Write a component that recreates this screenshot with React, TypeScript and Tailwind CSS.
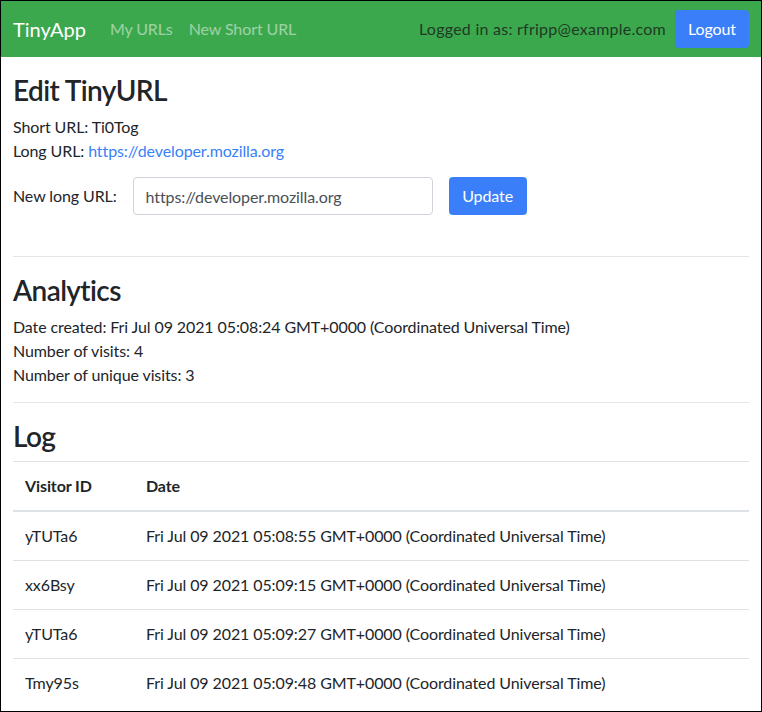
import React from 'react'

const visits = [
    { id: 'yTUTa6', date: 'Fri Jul 09 2021 05:08:55 GMT+0000 (Coordinated Universal Time)' },
    { id: 'xx6Bsy', date: 'Fri Jul 09 2021 05:09:15 GMT+0000 (Coordinated Universal Time)' },
    { id: 'yTUTa6', date: 'Fri Jul 09 2021 05:09:27 GMT+0000 (Coordinated Universal Time)' },
    { id: 'Tmy95s', date: 'Fri Jul 09 2021 05:09:48 GMT+0000 (Coordinated Universal Time)' },
]

export default function App() {
    return (
        <div className="h-[712px] w-[762px] overflow-hidden border border-black bg-white font-['Lato',sans-serif] text-base leading-6 tracking-[-0.1px] text-[#212529]">
            <nav className="flex h-14 items-center bg-[#3ca84e] px-3">
                <a className="mr-6 text-xl tracking-normal text-white">TinyApp</a>
                <div className="flex gap-4 text-base text-white/50">
                    <a>My URLs</a>
                    <a>New Short URL</a>
                </div>
                <div className="ml-auto flex items-center gap-[9px]">
                    <span className="tracking-[0.25px] text-[#1e3a23]">Logged in as: rfripp@example.com</span>
                    <button className="h-[38px] rounded bg-[#3a7ff9] px-[13px] text-white">Logout</button>
                </div>
            </nav>

            <main className="px-3 pt-4">
                <h2 className="mb-2 text-[28px] font-semibold leading-[34px] tracking-[-0.6px]">Edit TinyURL</h2>
                <p>Short URL: Ti0Tog</p>
                <p>
                    Long URL: <a className="text-[#3a7ff9]">https://developer.mozilla.org</a>
                </p>

                <form className="mt-[14px] flex items-center">
                    <label className="mr-4">New long URL:</label>
                    <input
                        className="h-[38px] w-[300px] rounded border border-[#ced4da] px-3 text-[#495057]"
                        defaultValue="https://developer.mozilla.org"
                    />
                    <button type="button" className="ml-4 h-[38px] w-[78px] rounded bg-[#3a7ff9] text-white">
                        Update
                    </button>
                </form>

                <hr className="mt-[41px] mb-4 border-black/10" />

                <h2 className="mb-2 text-[28px] font-semibold leading-[34px] tracking-[-0.6px]">Analytics</h2>
                <p>Date created: Fri Jul 09 2021 05:08:24 GMT+0000 (Coordinated Universal Time)</p>
                <p>Number of visits: 4</p>
                <p>Number of unique visits: 3</p>

                <hr className="mt-[15px] mb-4 border-black/10" />

                <h2 className="mb-2 text-[28px] font-semibold leading-[34px] tracking-[-0.6px]">Log</h2>
                <table className="w-full border-collapse text-left">
                    <thead>
                        <tr className="border-t border-b-2 border-t-[#dee2e6] border-b-[#dee2e6]">
                            <th className="w-[121px] p-3 font-bold">Visitor ID</th>
                            <th className="p-3 font-bold">Date</th>
                        </tr>
                    </thead>
                    <tbody>
                        {visits.map((v, i) => (
                            <tr key={i} className="border-t border-[#dee2e6] first:border-t-0">
                                <td className="p-3">{v.id}</td>
                                <td className="p-3">{v.date}</td>
                            </tr>
                        ))}
                    </tbody>
                </table>
            </main>
        </div>
    )
}
